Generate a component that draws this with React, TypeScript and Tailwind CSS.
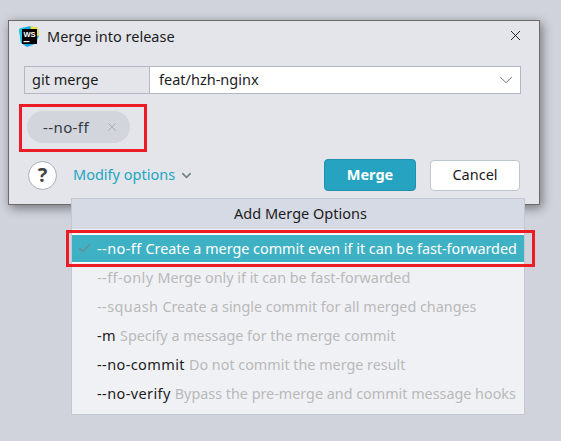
import React from 'react';
import { ChevronDown, Check, X } from 'lucide-react';

interface MergeOption {
  flag: string;
  text: string;
  disabled?: boolean;
}

const options: MergeOption[] = [
  { flag: '--ff-only', text: 'Merge only if it can be fast-forwarded', disabled: true },
  { flag: '--squash', text: 'Create a single commit for all merged changes', disabled: true },
  { flag: '-m', text: 'Specify a message for the merge commit' },
  { flag: '--no-commit', text: 'Do not commit the merge result' },
  { flag: '--no-verify', text: 'Bypass the pre-merge and commit message hooks' },
];

const WsLogo = () => (
  <svg width="21" height="21" viewBox="0 0 21 21">
    <path d="M1 3 L12 0 L20 2 L21 10 L17 18 L9 21 L3 17 Z" fill="#16a9e6" />
    <path d="M12 0 L20 2 L21 10 L15 8 Z" fill="#f5e83a" />
    <path d="M1 3 L6 1 L4 12 L3 17 Z" fill="#20c8d8" />
    <rect x="4" y="3" width="15" height="15" fill="#000" />
    <text x="5.5" y="10.5" fontSize="7.5" fontWeight="700" fill="#fff" fontFamily="'Liberation Sans', sans-serif">WS</text>
    <rect x="5.5" y="15" width="6" height="1.2" fill="#fff" />
  </svg>
);

export default function App() {
  return (
    <div className="relative h-[441px] w-[561px] overflow-hidden bg-[#d0d3db] pt-5 pl-2 font-['Noto_Sans','Open_Sans',sans-serif] text-[14.5px] text-[#1c1c1c]">
      {/* dialog */}
      <div className="h-[185px] w-[532px] border border-[#6f6a6a] bg-[#e3e5ea] shadow-[2px_3px_10px_rgba(0,0,0,0.45)]">
        <div className="flex h-[30px] items-center pt-[1px] pl-[9px]">
          <WsLogo />
          <span className="ml-[8px] leading-none">Merge into release</span>
          <X className="ml-auto mr-[15px] mb-[2px] text-[#111]" size={17} strokeWidth={1.3} />
        </div>

        <div className="mt-[15px] ml-[15px] flex h-[28px] w-[497px] border border-[#b2b8c6]">
          <div className="flex w-[125px] items-center border-r border-[#b2b8c6] pl-[7px]">git merge</div>
          <div className="flex flex-1 items-center bg-white pl-[9px]">
            feat/hzh-nginx
            <ChevronDown className="ml-auto mr-[3px] text-[#666]" size={22} strokeWidth={1} />
          </div>
        </div>

        <div className="mt-[10px] ml-[10px] h-[48px] w-[128px] border-[3px] border-[#ed1c24] pt-[4px] pl-[5px]">
          <div className="flex h-[32px] w-[103px] items-center rounded-full bg-[#d2d5dc] pl-[16px] text-[15px] text-[#333a44]">
            <span className="tracking-[0.4px]">--no-ff</span>
            <X className="ml-[16px] text-[#a3a7ae]" size={14} strokeWidth={1.4} />
          </div>
        </div>

        <div className="mt-[7px] ml-[19px] flex h-[32px] items-center">
          <div className="flex h-[29px] w-[29px] items-center justify-center rounded-full border border-[#a9adb5] bg-white text-[20px] font-bold text-[#444]">?</div>
          <span className="ml-[16px] text-[#22a5c0]">Modify options</span>
          <ChevronDown className="ml-[4px] mt-[1px] text-[#6f7f88]" size={15} strokeWidth={2.4} />
          <button className="ml-auto h-[32px] w-[92px] rounded-[4px] border border-[#2090ac] bg-[#25a3c1] font-bold text-white">Merge</button>
          <button className="ml-[14px] mr-[19px] h-[31px] w-[90px] rounded-[4px] border border-[#bfc5cf] bg-white">Cancel</button>
        </div>
      </div>

      {/* options popup */}
      <div className="absolute top-[198px] left-[71px] h-[217px] w-[454px] border border-[#c3c7d0] bg-[#f0f1f5]">
        <div className="flex h-[30px] items-center justify-center bg-[#d6dae4] pl-[5px]">Add Merge Options</div>
        <div className="mt-[5px] flex h-[29px] items-center border-y border-white bg-[#3fb1c5] pl-[5px] text-white">
          <Check className="mr-[5px] text-[#6f8a93]" size={15} strokeWidth={2.2} />
          <span className="tracking-[0.4px]">--no-ff</span>
          <span className="ml-[4px] text-[14.35px]">Create a merge commit even if it can be fast-forwarded</span>
        </div>
        {options.map((o) => (
          <div key={o.flag} className="flex h-[29px] items-center pl-[25px]">
            <span className={o.disabled ? 'tracking-[0.4px] text-[#b9b9b9]' : 'tracking-[0.4px] text-[#1c1c1c]'}>{o.flag}</span>
            <span className="ml-[4px] text-[14.35px] text-[#b9b9b9]">{o.text}</span>
          </div>
        ))}
      </div>

      {/* red marker over the selected row */}
      <div className="absolute top-[230px] left-[66px] h-[37px] w-[469px] border-[3px] border-[#ed1c24]" />
    </div>
  );
}
